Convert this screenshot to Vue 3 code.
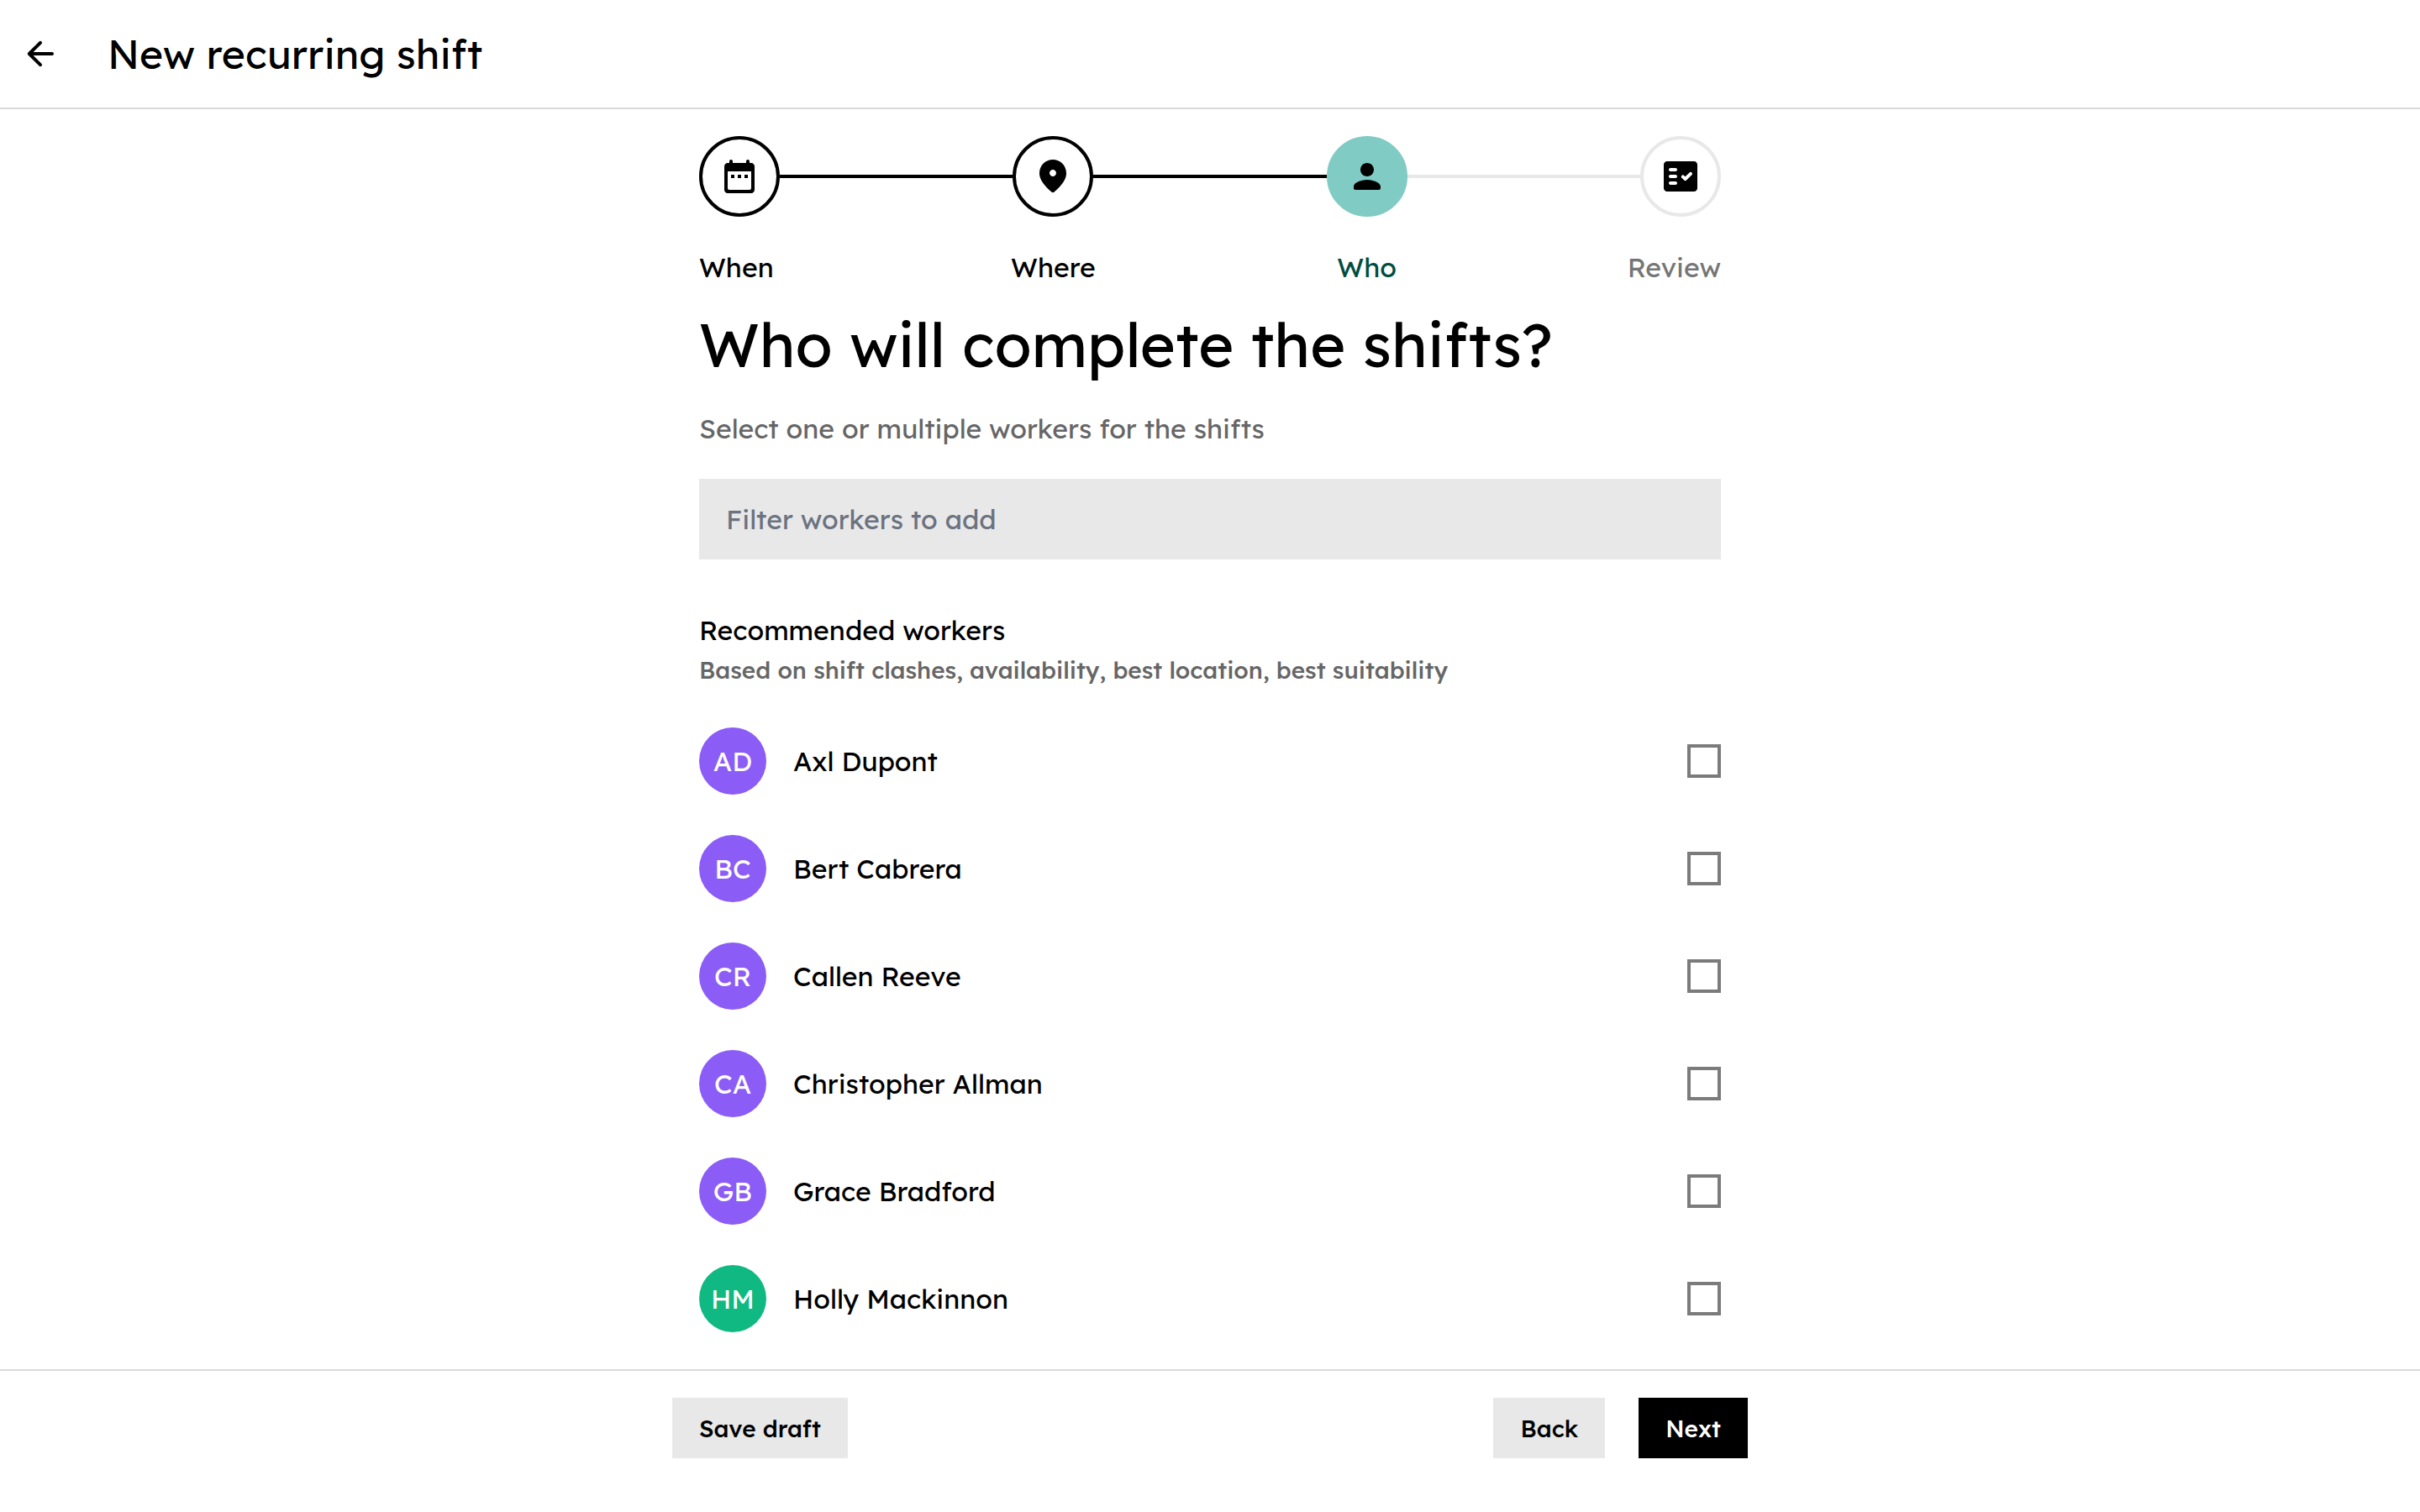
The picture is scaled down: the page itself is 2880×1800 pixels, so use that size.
<script setup>
import { ref } from 'vue'

const steps = [
  {
    label: 'When',
    state: 'done',
    icon: 'M19 4h-1V3c0-.55-.45-1-1-1s-1 .45-1 1v1H8V3c0-.55-.45-1-1-1s-1 .45-1 1v1H5c-1.11 0-1.99.9-1.99 2L3 20c0 1.1.89 2 2 2h14c1.1 0 2-.9 2-2V6c0-1.1-.9-2-2-2zm0 15c0 .55-.45 1-1 1H6c-.55 0-1-.45-1-1V9h14v10zM7 11h2v2H7zm4 0h2v2h-2zm4 0h2v2h-2z',
  },
  {
    label: 'Where',
    state: 'done',
    icon: 'M12 2c-4.2 0-8 3.22-8 8.2 0 3.18 2.45 6.92 7.34 11.23.38.33.95.33 1.33 0C17.55 17.12 20 13.38 20 10.2 20 5.22 16.2 2 12 2zm0 10c-1.1 0-2-.9-2-2s.9-2 2-2 2 .9 2 2-.9 2-2 2z',
  },
  {
    label: 'Who',
    state: 'current',
    icon: 'M12 12c2.21 0 4-1.79 4-4s-1.79-4-4-4-4 1.79-4 4 1.79 4 4 4zm0 2c-2.67 0-8 1.34-8 4v1c0 .55.45 1 1 1h14c.55 0 1-.45 1-1v-1c0-2.66-5.33-4-8-4z',
  },
  {
    label: 'Review',
    state: 'upcoming',
    icon: 'M20 3H4c-1.1 0-2 .9-2 2v14c0 1.1.9 2 2 2h16c1.1 0 2-.9 2-2V5c0-1.1-.9-2-2-2zM9 17H6c-.55 0-1-.45-1-1s.45-1 1-1h3c.55 0 1 .45 1 1s-.45 1-1 1zm0-4H6c-.55 0-1-.45-1-1s.45-1 1-1h3c.55 0 1 .45 1 1s-.45 1-1 1zm0-4H6c-.55 0-1-.45-1-1s.45-1 1-1h3c.55 0 1 .45 1 1s-.45 1-1 1zm9.7 2.12l-3.17 3.17c-.39.39-1.03.39-1.42 0l-1.41-1.42c-.39-.39-.39-1.02 0-1.41.39-.39 1.02-.39 1.41 0l.71.71 2.47-2.47c.39-.39 1.02-.39 1.41 0 .39.39.39 1.03 0 1.42z',
  },
]

const workers = [
  { initials: 'AD', name: 'Axl Dupont', tone: 'violet' },
  { initials: 'BC', name: 'Bert Cabrera', tone: 'violet' },
  { initials: 'CR', name: 'Callen Reeve', tone: 'violet' },
  { initials: 'CA', name: 'Christopher Allman', tone: 'violet' },
  { initials: 'GB', name: 'Grace Bradford', tone: 'violet' },
  { initials: 'HM', name: 'Holly Mackinnon', tone: 'green' },
]

const filter = ref('')
const selected = ref([])
</script>

<template>
  <div class="page">
    <header class="topbar">
      <button type="button" class="back" aria-label="Go back">
        <svg viewBox="0 0 24 24" aria-hidden="true">
          <path d="M19 11H7.83l4.88-4.88c.39-.39.39-1.03 0-1.42-.39-.39-1.02-.39-1.41 0l-6.59 6.59c-.39.39-.39 1.02 0 1.41l6.59 6.59c.39.39 1.02.39 1.41 0 .39-.39.39-1.02 0-1.41L7.83 13H19c.55 0 1-.45 1-1s-.45-1-1-1z" />
        </svg>
      </button>
      <h1 class="topbar-title">New recurring shift</h1>
    </header>

    <main class="content">
      <ol class="stepper">
        <template v-for="(step, i) in steps" :key="step.label">
          <li v-if="i > 0" class="line" :class="step.state" aria-hidden="true"></li>
          <li class="step" :class="step.state" :aria-current="step.state === 'current' ? 'step' : undefined">
            <span class="circle">
              <svg viewBox="0 0 24 24" aria-hidden="true"><path :d="step.icon" /></svg>
            </span>
            <span class="step-label">{{ step.label }}</span>
          </li>
        </template>
      </ol>

      <h2 class="title">Who will complete the shifts?</h2>
      <p class="subtitle">Select one or multiple workers for the shifts</p>
      <input v-model="filter" class="filter" type="text" placeholder="Filter workers to add" aria-label="Filter workers to add" />

      <h3 class="group-title">Recommended workers</h3>
      <p class="group-note">Based on shift clashes, availability, best location, best suitability</p>

      <ul class="workers">
        <li v-for="worker in workers" :key="worker.name">
          <label class="worker">
            <span class="avatar" :class="worker.tone" aria-hidden="true">{{ worker.initials }}</span>
            <span class="name">{{ worker.name }}</span>
            <input v-model="selected" class="tick" type="checkbox" :value="worker.name" />
          </label>
        </li>
      </ul>
    </main>

    <footer class="footer">
      <div class="actions">
        <button type="button" class="btn save">Save draft</button>
        <button type="button" class="btn">Back</button>
        <button type="button" class="btn primary">Next</button>
      </div>
    </footer>
  </div>
</template>

<style>
body {
  background: #fff;
}
</style>

<style scoped>
.page,
.page * {
  box-sizing: border-box;
}

.page {
  display: flex;
  flex-direction: column;
  min-height: 100vh;
  color: #000;
  font: 400 32px/40px Lexend, Inter, sans-serif;
}

h1,
h2,
h3,
p,
ol,
ul {
  margin: 0;
  padding: 0;
  font-weight: 400;
  list-style: none;
}

button,
input {
  font-family: inherit;
  color: inherit;
}

svg {
  display: block;
  width: 48px;
  height: 48px;
  fill: currentColor;
}

.topbar {
  display: flex;
  align-items: center;
  gap: 56px;
  padding: 32px 24px;
  border-bottom: 2px solid #dadada;
}

.back {
  padding: 0;
  border: 0;
  background: none;
  cursor: pointer;
}

.topbar-title {
  font-size: 48px;
  line-height: 64px;
}

.content {
  flex: 1;
  width: 100%;
  max-width: 1280px;
  margin: 0 auto;
  padding: 32px 32px 0;
}

.stepper {
  display: flex;
}

.step {
  display: flex;
  flex-direction: column;
  align-items: center;
  gap: 40px;
  width: 96px;
  white-space: nowrap;
}

.step:first-child {
  align-items: flex-start;
}

.step:last-child {
  align-items: flex-end;
}

.circle {
  display: grid;
  place-items: center;
  width: 96px;
  height: 96px;
  border: 4px solid #000;
  border-radius: 50%;
}

.current .circle {
  border-color: #80cbc4;
  background: #80cbc4;
}

.upcoming .circle {
  border-color: #e8e8e8;
}

.current .step-label {
  color: #004d40;
}

.upcoming .step-label {
  color: #757575;
}

.line {
  flex: 1;
  height: 4px;
  margin-top: 46px;
  background: #000;
}

.line.upcoming {
  background: #e8e8e8;
}

.title {
  margin-top: 32px;
  font-size: 72px;
  line-height: 80px;
}

.subtitle {
  margin-top: 40px;
  color: #666;
}

.filter {
  display: block;
  width: 100%;
  height: 96px;
  margin-top: 40px;
  padding: 0 32px;
  border: 0;
  border-radius: 0;
  background: #e8e8e8;
  font-size: 32px;
}

.filter::placeholder {
  color: #6b7280;
  opacity: 1;
}

.group-title {
  margin-top: 64px;
  font-size: 32px;
}

.group-note {
  color: #666;
  font-size: 28px;
  font-weight: 500;
  line-height: 56px;
}

.workers {
  padding-top: 16px;
}

.worker {
  display: flex;
  align-items: center;
  gap: 32px;
  height: 128px;
  cursor: pointer;
}

.avatar {
  display: grid;
  place-items: center;
  width: 80px;
  height: 80px;
  border-radius: 50%;
  color: #fff;
}

.avatar.violet {
  background: #8b5cf6;
}

.avatar.green {
  background: #10b981;
}

.name {
  flex: 1;
}

.tick {
  appearance: none;
  width: 40px;
  height: 40px;
  margin: 0;
  border: 4px solid #7b7b7b;
  border-radius: 0;
  background: #fff;
  cursor: pointer;
}

.tick:checked {
  border-color: #000;
  background: #000;
}

.footer {
  position: sticky;
  bottom: 0;
  border-top: 2px solid #dadada;
  background: #fff;
}

.actions {
  display: flex;
  gap: 40px;
  max-width: 1280px;
  margin: 0 auto;
  padding: 32px 0 64px;
}

.btn {
  height: 72px;
  padding: 0 32px;
  border: 0;
  background: #e8e8e8;
  font-size: 28px;
  font-weight: 500;
  cursor: pointer;
}

.save {
  margin-right: auto;
}

.primary {
  background: #000;
  color: #fff;
}
</style>
